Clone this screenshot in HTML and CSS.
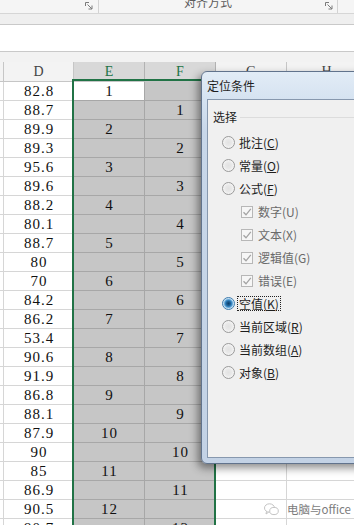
FILE: index.html
```html
<!DOCTYPE html>
<html lang="zh-CN">
<head>
<meta charset="UTF-8">
<meta name="viewport" content="width=device-width, initial-scale=1.0">
<title>定位条件</title>
<link rel="stylesheet" href="styles.css">
</head>
<body>

<div class="ribbon">
    <div class="rb-group rb-first">
        <svg class="launcher" width="8" height="8" viewBox="0 0 8 8"><path d="M0.5 4V0.5H4M2.5 2.5L7 7M7 3.5V7H3.5" fill="none" stroke="#7a7a7a" stroke-width="1"/></svg>
    </div>
    <div class="rb-group rb-align">
        <span class="rb-label">对齐方式</span>
        <svg class="launcher" width="8" height="8" viewBox="0 0 8 8"><path d="M0.5 4V0.5H4M2.5 2.5L7 7M7 3.5V7H3.5" fill="none" stroke="#7a7a7a" stroke-width="1"/></svg>
    </div>
    <div class="rb-group rb-rest"></div>
</div>
<div class="ribbon-foot"></div>
<div class="formula-bar"></div>
<div class="sheet-gap"></div>

<table class="grid">
    <colgroup>
        <col class="c-corner"><col class="c-first"><col class="c-col"><col class="c-col"><col class="c-col"><col class="c-last">
    </colgroup>
    <tr class="col-head"><th></th><th>D</th><th class="sel">E</th><th class="sel">F</th><th>G</th><th>H</th></tr>
    <tr><td></td><td>82.8</td><td class="active">1</td><td class="sel"></td><td></td><td></td></tr>
    <tr><td></td><td>88.7</td><td class="sel"></td><td class="sel">1</td><td></td><td></td></tr>
    <tr><td></td><td>89.9</td><td class="sel">2</td><td class="sel"></td><td></td><td></td></tr>
    <tr><td></td><td>89.3</td><td class="sel"></td><td class="sel">2</td><td></td><td></td></tr>
    <tr><td></td><td>95.6</td><td class="sel">3</td><td class="sel"></td><td></td><td></td></tr>
    <tr><td></td><td>89.6</td><td class="sel"></td><td class="sel">3</td><td></td><td></td></tr>
    <tr><td></td><td>88.2</td><td class="sel">4</td><td class="sel"></td><td></td><td></td></tr>
    <tr><td></td><td>80.1</td><td class="sel"></td><td class="sel">4</td><td></td><td></td></tr>
    <tr><td></td><td>88.7</td><td class="sel">5</td><td class="sel"></td><td></td><td></td></tr>
    <tr><td></td><td>80</td><td class="sel"></td><td class="sel">5</td><td></td><td></td></tr>
    <tr><td></td><td>70</td><td class="sel">6</td><td class="sel"></td><td></td><td></td></tr>
    <tr><td></td><td>84.2</td><td class="sel"></td><td class="sel">6</td><td></td><td></td></tr>
    <tr><td></td><td>86.2</td><td class="sel">7</td><td class="sel"></td><td></td><td></td></tr>
    <tr><td></td><td>53.4</td><td class="sel"></td><td class="sel">7</td><td></td><td></td></tr>
    <tr><td></td><td>90.6</td><td class="sel">8</td><td class="sel"></td><td></td><td></td></tr>
    <tr><td></td><td>91.9</td><td class="sel"></td><td class="sel">8</td><td></td><td></td></tr>
    <tr><td></td><td>86.8</td><td class="sel">9</td><td class="sel"></td><td></td><td></td></tr>
    <tr><td></td><td>88.1</td><td class="sel"></td><td class="sel">9</td><td></td><td></td></tr>
    <tr><td></td><td>87.9</td><td class="sel">10</td><td class="sel"></td><td></td><td></td></tr>
    <tr><td></td><td>90</td><td class="sel"></td><td class="sel">10</td><td></td><td></td></tr>
    <tr><td></td><td>85</td><td class="sel">11</td><td class="sel"></td><td></td><td></td></tr>
    <tr><td></td><td>86.9</td><td class="sel"></td><td class="sel">11</td><td></td><td></td></tr>
    <tr><td></td><td>90.5</td><td class="sel">12</td><td class="sel"></td><td></td><td></td></tr>
    <tr><td></td><td>90.7</td><td class="sel"></td><td class="sel">12</td><td></td><td></td></tr>
</table>

<div class="selection"></div>

<div class="dialog">
    <div class="dialog-title">定位条件</div>
    <div class="dialog-body">
        <div class="group-head">选择</div>
        <div class="options">
            <div class="option"><span class="radio"></span>批注(<u>C</u>)</div>
            <div class="option"><span class="radio"></span>常量(<u>O</u>)</div>
            <div class="option"><span class="radio"></span>公式(<u>F</u>)</div>
            <div class="option sub"><span class="check"><svg width="10" height="10" viewBox="0 0 10 10"><path d="M1.5 5.2L4 7.8L8.8 1.8" fill="none" stroke="#a3a3a3" stroke-width="1.3"/></svg></span>数字(U)</div>
            <div class="option sub"><span class="check"><svg width="10" height="10" viewBox="0 0 10 10"><path d="M1.5 5.2L4 7.8L8.8 1.8" fill="none" stroke="#a3a3a3" stroke-width="1.3"/></svg></span>文本(X)</div>
            <div class="option sub"><span class="check"><svg width="10" height="10" viewBox="0 0 10 10"><path d="M1.5 5.2L4 7.8L8.8 1.8" fill="none" stroke="#a3a3a3" stroke-width="1.3"/></svg></span>逻辑值(G)</div>
            <div class="option sub"><span class="check"><svg width="10" height="10" viewBox="0 0 10 10"><path d="M1.5 5.2L4 7.8L8.8 1.8" fill="none" stroke="#a3a3a3" stroke-width="1.3"/></svg></span>错误(E)</div>
            <div class="option"><span class="radio on"></span><span class="focus">空值(<u>K</u>)</span></div>
            <div class="option"><span class="radio"></span>当前区域(<u>R</u>)</div>
            <div class="option"><span class="radio"></span>当前数组(<u>A</u>)</div>
            <div class="option"><span class="radio"></span>对象(<u>B</u>)</div>
        </div>
    </div>
</div>

<div class="watermark">
    <svg width="15" height="13" viewBox="0 0 15 13"><ellipse cx="5.5" cy="5" rx="5" ry="4.2" fill="none" stroke="#c4c4c4"/><ellipse cx="10" cy="8" rx="4.3" ry="3.6" fill="#fff" stroke="#c4c4c4"/><path d="M2.5 8.5L2 11L4.5 9.3" fill="none" stroke="#c4c4c4"/></svg>
    <span>电脑与office</span>
</div>

</body>
</html>
```

FILE: styles.css
```css
body {
    margin: 0;
    width: 354px;
    height: 525px;
    overflow: hidden;
    position: relative;
    background-color: #fff;
    font-family: "Liberation Serif", serif;
}

/* ribbon strip */
.ribbon {
    display: flex;
    height: 13px;
    background-color: #f5f5f5;
    border-bottom: 1px solid #d6d6d6;
    overflow: hidden;
}
.rb-group {
    display: flex;
    box-sizing: border-box;
    height: 13px;
}
.rb-first {
    width: 99px;
    justify-content: flex-end;
    padding-right: 5px;
    border-right: 1px solid #d3d3d3;
}
.rb-align {
    width: 239px;
    padding-left: 85px;
    padding-right: 4px;
    border-right: 1px solid #d3d3d3;
}
.rb-rest {
    flex: 1;
}
.rb-label {
    flex: 1;
    font: 12px/12px "Noto Sans CJK SC", sans-serif;
    color: #5c5c5c;
    margin-top: -4px;
}
.launcher {
    margin-top: 2px;
}
.ribbon-foot {
    height: 10px;
    background-color: #efefef;
    border-bottom: 1px solid #c9c9c9;
}
.formula-bar {
    height: 26px;
    background-color: #fff;
    border-bottom: 1px solid #c9c9c9;
}
.sheet-gap {
    height: 10px;
    background-color: #f2f2f2;
}

/* worksheet */
.grid {
    border-spacing: 0;
    table-layout: fixed;
    width: 367px;
}
.c-corner { width: 4px; }
.c-first { width: 70px; }
.c-col { width: 71px; }
.c-last { width: 80px; }
.grid tr {
    height: 19px;
}
.grid td,
.grid th {
    padding: 0;
    border-right: 1px solid #d6d6d6;
    border-bottom: 1px solid #d6d6d6;
    text-align: center;
    white-space: nowrap;
    overflow: hidden;
    line-height: 18px;
    font-size: 15px;
    color: #111;
}
.grid td {
    letter-spacing: 1px;
    text-indent: 1px;
}
.grid th {
    font-size: 14px;
    font-weight: normal;
    color: #444;
    background-color: #f3f3f3;
    border-right-color: #c6c6c6;
    border-bottom-color: #c6c6c6;
    line-height: 19px;
}
.grid th.sel {
    background-color: #d8d8d8;
    color: #217346;
    border-right-color: #b2b2b2;
}
.grid td.sel {
    background-color: #c6c6c6;
    border-right-color: #a7a7a7;
    border-bottom-color: #a7a7a7;
}
.grid td.active {
    background-color: #fff;
    border-right-color: #a7a7a7;
    border-bottom-color: #a7a7a7;
}

.selection {
    position: absolute;
    left: 72px;
    top: 79px;
    width: 144px;
    height: 470px;
    box-sizing: border-box;
    border: 2px solid #217346;
}

/* dialog */
.dialog {
    position: absolute;
    left: 201px;
    top: 71px;
    width: 170px;
    height: 393px;
    box-sizing: border-box;
    display: flex;
    flex-direction: column;
    padding: 0 0 5px 5px;
    border: 1px solid #61738c;
    border-radius: 6px 0 0 6px;
    background: linear-gradient(180deg, #e2ecf6 0, #d6e3f1 26px, #c8d7e9 60px, #c3d2e5 100%);
    box-shadow: -3px 4px 9px rgba(0, 0, 0, 0.45);
    font-family: "Noto Sans CJK SC", sans-serif;
    font-size: 12px;
    color: #1e1e1e;
}
.dialog-title {
    height: 27px;
    line-height: 27px;
}
.dialog-body {
    flex: 1;
    background-color: #f0f0f0;
    border: 1px solid #8798ae;
    border-right: none;
}
.group-head {
    display: flex;
    align-items: center;
    margin-top: 9px;
    padding-left: 5px;
    line-height: 16px;
}
.group-head::after {
    content: "";
    flex: 1;
    margin-left: 3px;
    border-top: 1px solid #dcdcdc;
}
.options {
    padding-top: 6px;
}
.option {
    display: flex;
    align-items: center;
    height: 23px;
    padding-left: 14px;
    line-height: 16px;
}
.option.sub {
    padding-left: 33px;
    color: #6a6a6a;
}
.option u {
    text-underline-offset: 1px;
}
.radio {
    width: 13px;
    height: 13px;
    box-sizing: border-box;
    margin-right: 4px;
    border-radius: 50%;
    border: 1px solid #9a9a9a;
    background: radial-gradient(circle at 50% 50%, #e2e2e2 0, #e8e8e8 3px, #f7f7f7 6px);
}
.radio.on {
    border-color: #3d7bad;
    background: radial-gradient(circle at 50% 50%, #0d3f6a 0, #1d5f95 2px, #3e90cc 3.5px, #bfdcf0 5px, #eef6fc 6px);
}
.check {
    width: 12px;
    height: 12px;
    box-sizing: border-box;
    margin-right: 5px;
    border: 1px solid #b7b7b7;
    background-color: #f6f6f6;
    display: flex;
    align-items: center;
    justify-content: center;
}
.focus {
    border: 1px dotted #222;
    padding: 0 1px;
    line-height: 13px;
    margin-left: -2px;
}

.watermark {
    position: absolute;
    left: 264px;
    top: 501px;
    display: flex;
    align-items: center;
    gap: 8px;
    font-family: "Noto Sans CJK SC", sans-serif;
    font-size: 11.5px;
    color: #7c7c7c;
    text-shadow: 0 0 2px #fff;
}
```
